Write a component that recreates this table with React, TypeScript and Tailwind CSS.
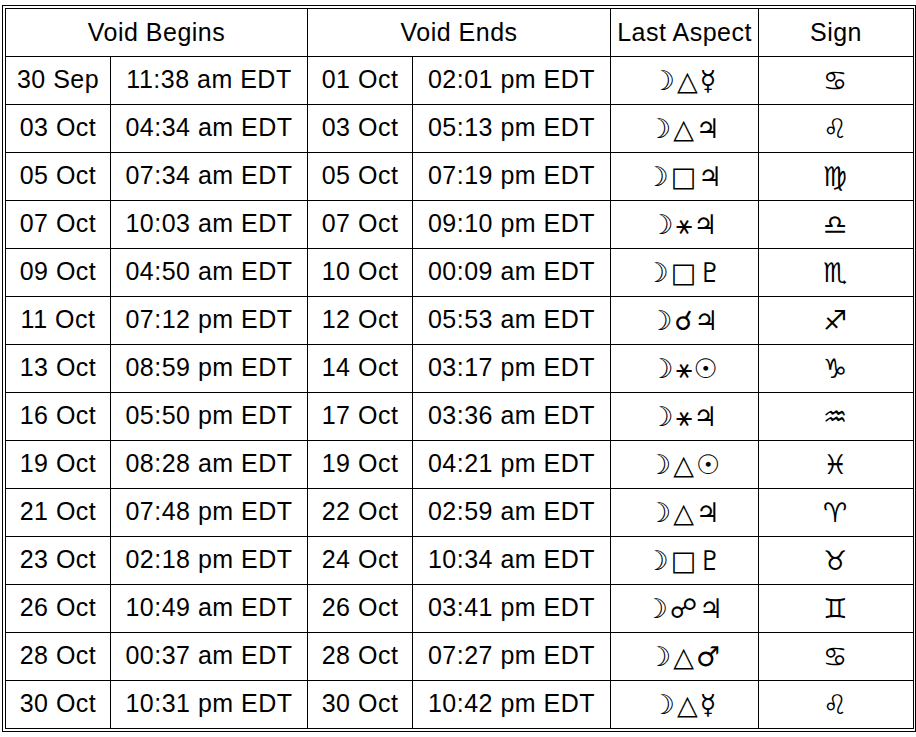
const rows: [string, string, string, string, string, string][] = [
  ['30 Sep', '11:38 am EDT', '01 Oct', '02:01 pm EDT', '☽△☿', '♋'],
  ['03 Oct', '04:34 am EDT', '03 Oct', '05:13 pm EDT', '☽△♃', '♌'],
  ['05 Oct', '07:34 am EDT', '05 Oct', '07:19 pm EDT', '☽□♃', '♍'],
  ['07 Oct', '10:03 am EDT', '07 Oct', '09:10 pm EDT', '☽⚹♃', '♎'],
  ['09 Oct', '04:50 am EDT', '10 Oct', '00:09 am EDT', '☽□♇', '♏'],
  ['11 Oct', '07:12 pm EDT', '12 Oct', '05:53 am EDT', '☽☌♃', '♐'],
  ['13 Oct', '08:59 pm EDT', '14 Oct', '03:17 pm EDT', '☽⚹☉', '♑'],
  ['16 Oct', '05:50 pm EDT', '17 Oct', '03:36 am EDT', '☽⚹♃', '♒'],
  ['19 Oct', '08:28 am EDT', '19 Oct', '04:21 pm EDT', '☽△☉', '♓'],
  ['21 Oct', '07:48 pm EDT', '22 Oct', '02:59 am EDT', '☽△♃', '♈'],
  ['23 Oct', '02:18 pm EDT', '24 Oct', '10:34 am EDT', '☽□♇', '♉'],
  ['26 Oct', '10:49 am EDT', '26 Oct', '03:41 pm EDT', '☽☍♃', '♊'],
  ['28 Oct', '00:37 am EDT', '28 Oct', '07:27 pm EDT', '☽△♂', '♋'],
  ['30 Oct', '10:31 pm EDT', '30 Oct', '10:42 pm EDT', '☽△☿', '♌'],
];

const cell = 'border border-black h-[48px] p-0 text-center align-middle';
const head = 'font-normal tracking-[0.5px]';
const txt = 'pb-[2px] tracking-[0.5px]';
const sym = "font-['DejaVu_Sans',sans-serif] text-[27px] leading-none tracking-[2px] pb-[1px]";

export default function App() {
  return (
    <div className="min-h-screen bg-white pt-[5px] pl-[2px] font-['Liberation_Sans',Arial,sans-serif] text-[25px] leading-none text-black">
      <div className="w-[914px] border border-black p-[2px]">
        <table className="w-[908px] table-fixed border-collapse">
          <colgroup>
            <col className="w-[105px]" />
            <col className="w-[197px]" />
            <col className="w-[105px]" />
            <col className="w-[198px]" />
            <col className="w-[148px]" />
            <col className="w-[155px]" />
          </colgroup>
          <thead>
            <tr>
              <th colSpan={2} className={`${cell} ${head}`}>Void Begins</th>
              <th colSpan={2} className={`${cell} ${head}`}>Void Ends</th>
              <th className={`${cell} ${head}`}>Last Aspect</th>
              <th className={`${cell} ${head}`}>Sign</th>
            </tr>
          </thead>
          <tbody>
            {rows.map((r, i) => (
              <tr key={i}>
                <td className={`${cell} ${txt}`}>{r[0]}</td>
                <td className={`${cell} ${txt}`}>{r[1]}</td>
                <td className={`${cell} ${txt}`}>{r[2]}</td>
                <td className={`${cell} ${txt}`}>{r[3]}</td>
                <td className={`${cell} ${sym}`}>{r[4]}</td>
                <td className={`${cell} ${sym}`}>{r[5]}</td>
              </tr>
            ))}
          </tbody>
        </table>
      </div>
    </div>
  );
}
